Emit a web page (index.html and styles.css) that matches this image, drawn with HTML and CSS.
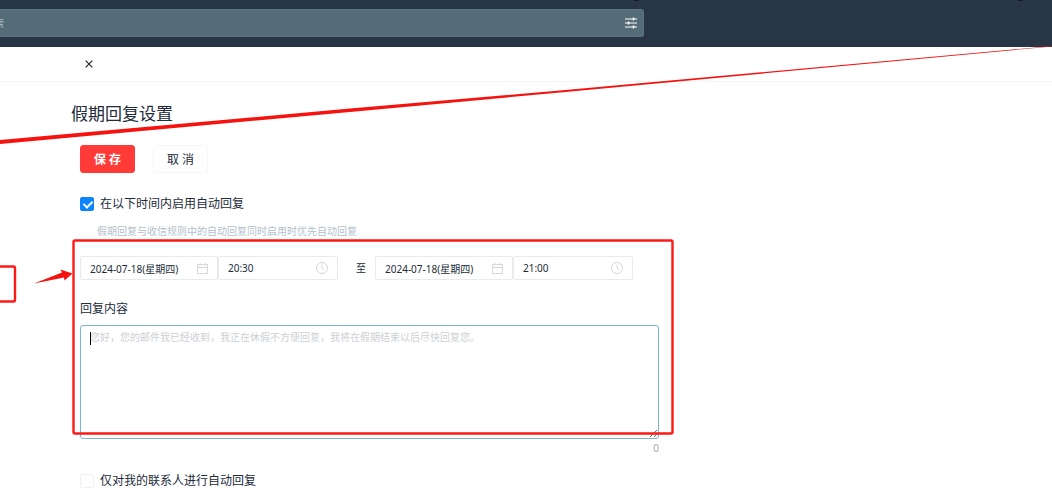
FILE: index.html
```html
<!DOCTYPE html>
<html lang="zh-CN">

<head>
    <meta charset="UTF-8">
    <meta name="viewport" content="width=device-width, initial-scale=1.0">
    <title>假期回复设置</title>
    <link rel="stylesheet" href="styles.css">
</head>

<body>
    <header class="header">
        <div class="search">
            <input type="text" class="search-input" placeholder="搜索" aria-label="搜索" />
            <button type="button" class="icon-button" aria-label="筛选">
                <svg width="12" height="12" viewBox="0 0 12 12" fill="none" stroke="#fff">
                    <path d="M0 2h12M0 6h12M0 10h12" />
                    <path d="M8.5 .5v3M3.500 4.500v3M8.500 8.500v3" stroke-width="1.5" />
                </svg>
            </button>
        </div>
    </header>

    <div class="tabs">
        <button type="button" class="icon-button" aria-label="关闭">
            <svg width="8" height="8" viewBox="0 0 8 8" fill="none" stroke="#222b36" stroke-width="1.2">
                <path d="M.7.7l6.600 6.600M7.300.7L.7 7.300" />
            </svg>
        </button>
    </div>

    <main class="content">
        <h1 class="title">假期回复设置</h1>
        <form class="form">
            <div class="actions">
                <button type="button" class="button button-primary">保 存</button>
                <button type="button" class="button">取 消</button>
            </div>

            <label class="check-row"><input type="checkbox" class="checkbox" checked />在以下时间内启用自动回复</label>
            <p class="hint">假期回复与收信规则中的自动回复同时启用时优先自动回复</p>

            <div class="range">
                <div class="picker">
                    <div class="field field-date">
                        <input type="text" value="2024-07-18(星期四)" aria-label="开始日期" />
                        <svg width="11" height="11" viewBox="0 0 11 11" fill="none" stroke="#d3d8db">
                            <path d="M.5 1.5h10v9H.5zM.5 4.5h10M3 0v2.5M8 0v2.5" />
                        </svg>
                    </div>
                    <div class="field field-time">
                        <input type="text" value="20:30" aria-label="开始时间" />
                        <svg width="12" height="12" viewBox="0 0 12 12" fill="none" stroke="#d3d8db">
                            <circle cx="6" cy="6" r="5.5" />
                            <path d="M6 3v3.3l2 1.5" />
                        </svg>
                    </div>
                </div>
                <span class="to">至</span>
                <div class="picker">
                    <div class="field field-date">
                        <input type="text" value="2024-07-18(星期四)" aria-label="结束日期" />
                        <svg width="11" height="11" viewBox="0 0 11 11" fill="none" stroke="#d3d8db">
                            <path d="M.5 1.5h10v9H.5zM.5 4.5h10M3 0v2.5M8 0v2.5" />
                        </svg>
                    </div>
                    <div class="field field-time">
                        <input type="text" value="21:00" aria-label="结束时间" />
                        <svg width="12" height="12" viewBox="0 0 12 12" fill="none" stroke="#d3d8db">
                            <circle cx="6" cy="6" r="5.5" />
                            <path d="M6 3v3.3l2 1.5" />
                        </svg>
                    </div>
                </div>
            </div>

            <label class="label" for="reply">回复内容</label>
            <div class="reply">
                <textarea id="reply" class="textarea" placeholder="您好，您的邮件我已经收到，我正在休假不方便回复，我将在假期结束以后尽快回复您。"></textarea>
                <span class="caret"></span>
            </div>
            <div class="count">0</div>

            <label class="check-row"><input type="checkbox" class="checkbox" />仅对我的联系人进行自动回复</label>
        </form>
    </main>

    <!-- red guide marks over the page -->
    <svg class="marks" width="1052" height="500" viewBox="0 0 1052 500">
        <path d="M634 0h5q-2 2-5 0M1018 0h5q-2 2-5 0" fill="#0b1118" />
        <path d="M0 140L350 108.5L560 90.5L1052 46L1052 46.5L560 92.5L350 112L0 144z" fill="#f5120f" />
        <g fill="none" stroke="#fb1a17" stroke-width="2.4">
            <rect x="73.5" y="240.5" width="599" height="193" rx="1.5" />
            <rect x="-5" y="266.5" width="20" height="35" rx="1.5" />
        </g>
        <path d="M34 283.5L62 272.5L60.500 269.500L72.500 273.500L64.500 280.500L64 277.500z" fill="#f5120f" />
    </svg>
</body>

</html>
```
FILE: styles.css
```css
* {
    box-sizing: border-box;
}

body {
    margin: 0;
    background-color: #fff;
    color: #222b3a;
    font-family: "Noto Sans", "Noto Sans CJK SC", sans-serif;
    font-size: 12px;
    line-height: 16px;
    overflow-x: hidden;
}

input,
button,
textarea {
    font-family: inherit;
    color: inherit;
}

.header {
    height: 47px;
    padding-top: 9px;
    background-color: #273546;
}

.search {
    display: flex;
    align-items: center;
    width: 61.2%;
    height: 28px;
    padding-right: 6px;
    background-color: #546b78;
    border: 1px solid #5c7480;
    border-left: none;
    border-radius: 0 3px 3px 0;
}

.search-input {
    flex: 1;
    min-width: 0;
    padding: 0;
    background: none;
    border: none;
    outline: none;
    font-size: 10px;
    text-indent: -16px;
}

.search-input::placeholder {
    color: #b4c2ca;
}

.icon-button {
    display: flex;
    padding: 0;
    background: none;
    border: none;
}

.tabs {
    display: flex;
    align-items: center;
    height: 35px;
    padding-left: 85px;
    border-bottom: 1px solid #f5f6f7;
}

.content {
    padding: 20px 20px 0 71px;
}

.title {
    margin: 0;
    font-size: 17px;
    font-weight: 400;
    line-height: 24px;
}

.form {
    max-width: 588px;
    padding-left: 9px;
}

.actions {
    display: flex;
    gap: 18px;
    margin: 19px 0 20px;
}

.button {
    width: 55px;
    height: 28px;
    padding: 0;
    background-color: #fff;
    border: 1px solid #f6f7f9;
    border-radius: 3px;
    font-size: 12px;
}

.button-primary {
    background-color: #ff3a37;
    border-color: #ff3a37;
    color: #fff;
    font-weight: 700;
}

.check-row {
    display: flex;
    align-items: center;
    gap: 6px;
    height: 22px;
}

.checkbox {
    appearance: none;
    width: 14px;
    height: 14px;
    margin: 0;
    border: 1px solid #eff1f2;
    border-radius: 2px;
}

.checkbox:checked {
    position: relative;
    background-color: #0a84ff;
    border-color: #0a84ff;
}

.checkbox:checked::after {
    content: "";
    position: absolute;
    left: 4px;
    top: 1px;
    width: 4px;
    height: 7px;
    border: solid #fff;
    border-width: 0 2px 2px 0;
    transform: rotate(45deg);
}

.hint {
    margin: 8px 0 17px;
    padding-left: 17px;
    color: #b3bfcc;
    font-size: 10px;
}

.range {
    display: flex;
    align-items: center;
}

.picker {
    display: flex;
}

.field {
    display: flex;
    align-items: center;
    height: 24px;
    padding: 0 9px;
    border: 1px solid #e8ebed;
    border-radius: 2px;
}

.field input {
    flex: 1;
    min-width: 0;
    padding: 0;
    border: none;
    outline: none;
    font-size: 10px;
}

.field-date {
    width: 138px;
}

.field-time {
    width: 120px;
}

.to {
    width: 37px;
    font-size: 10px;
    text-align: center;
    padding-left: 9px;
}

.label {
    display: block;
    margin: 21px 0 8px;
}

.reply {
    position: relative;
}

.textarea {
    display: block;
    width: 100%;
    height: 114px;
    padding: 3px 9px;
    border: 1px solid #7db4cf;
    border-radius: 3px;
    outline: none;
    font-size: 10px;
    line-height: 16px;
    resize: vertical;
}

.textarea::placeholder {
    color: #ccd1d5;
}

.caret {
    position: absolute;
    left: 10px;
    top: 7px;
    width: 1px;
    height: 13px;
    background-color: #000;
}

.count {
    margin-bottom: 13px;
    color: #a5abb0;
    font-size: 10px;
    line-height: 18px;
    text-align: right;
}

.marks {
    position: absolute;
    left: 0;
    top: 0;
    pointer-events: none;
}
```
